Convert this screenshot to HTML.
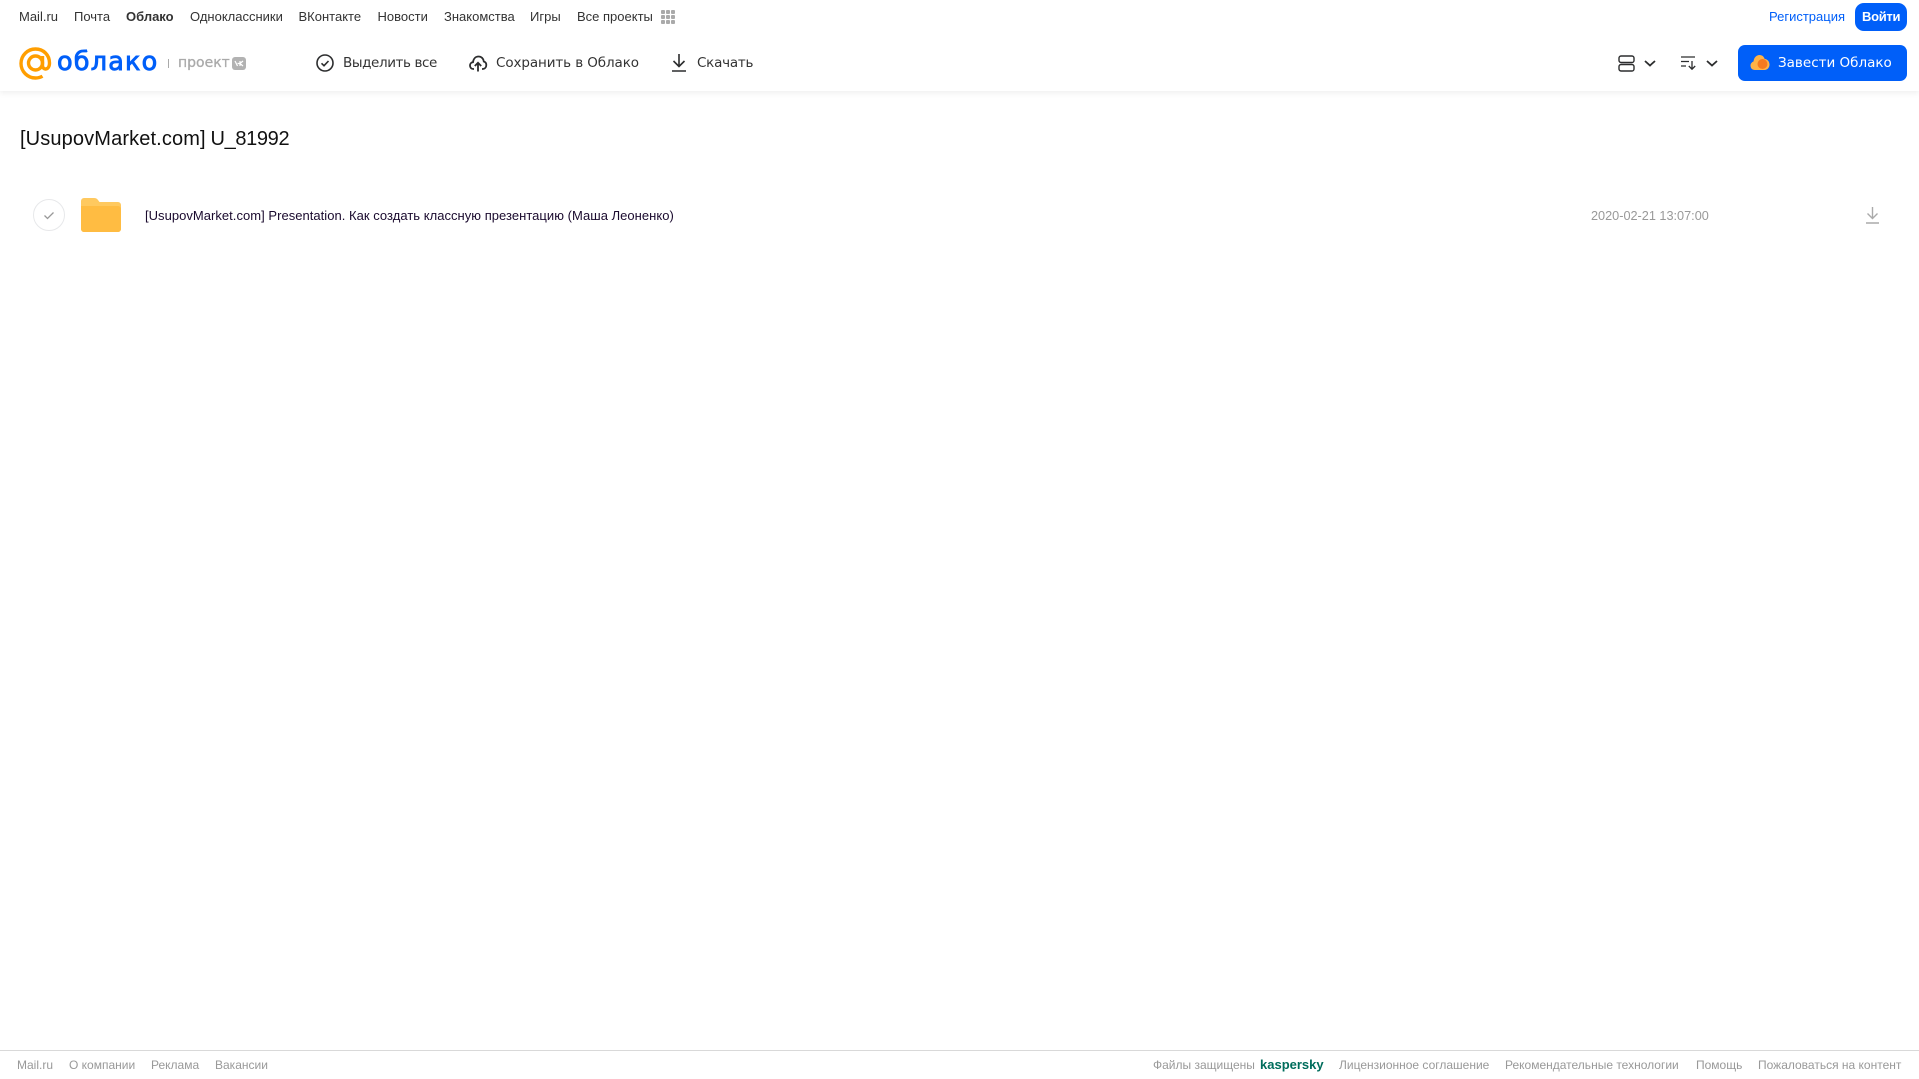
<!DOCTYPE html>
<html lang="ru"><head><meta charset="utf-8"><title>Облако</title>
<style>
html,body{margin:0;padding:0;width:1919px;height:1079px;overflow:hidden;background:#fff}
body{position:relative;font-family:"Liberation Sans",sans-serif}
.t{position:absolute;white-space:nowrap;transform-origin:left center;line-height:16px}
.n{font-size:13px;top:9px;color:#333}
.m{font-family:"DejaVu Sans",sans-serif;font-size:13.5px;top:55px;color:#333;line-height:16px}
.f{font-size:12px;top:1057px;color:#999}
svg{position:absolute;overflow:visible}
#hd{position:absolute;left:0;top:0;width:1919px;height:91px;background:#fff;box-shadow:0 2px 6px rgba(0,0,0,.07)}
</style></head><body>
<div id="hd"></div>
<span class="t n" style="left:19px">Mail.ru</span>
<span class="t n" style="left:74px">Почта</span>
<span class="t n" style="left:126px;font-weight:bold">Облако</span>
<span class="t n" style="left:190px">Одноклассники</span>
<span class="t n" style="left:298.500px">ВКонтакте</span>
<span class="t n" style="left:377.500px">Новости</span>
<span class="t n" style="left:444px">Знакомства</span>
<span class="t n" style="left:530px">Игры</span>
<span class="t n" style="left:577px">Все проекты</span>
<svg style="left:661px;top:10px" width="14" height="14" fill="#aaa"><rect x="0" y="0" width="4" height="4" rx="1"/><rect x="5" y="0" width="4" height="4" rx="1"/><rect x="10" y="0" width="4" height="4" rx="1"/><rect x="0" y="5" width="4" height="4" rx="1"/><rect x="5" y="5" width="4" height="4" rx="1"/><rect x="10" y="5" width="4" height="4" rx="1"/><rect x="0" y="10" width="4" height="4" rx="1"/><rect x="5" y="10" width="4" height="4" rx="1"/><rect x="10" y="10" width="4" height="4" rx="1"/></svg>
<span class="t n" style="left:1769px;color:#005ff9">Регистрация</span>
<div style="position:absolute;left:1855px;top:3px;width:52px;height:28px;border-radius:9px;background:#005ff9"></div>
<span class="t n" style="left:1862px;color:#fff;font-weight:bold;letter-spacing:-.3px">Войти</span>

<svg style="left:19px;top:47px" width="33" height="33" viewBox="0 0 33 33" fill="none" stroke="#ff9e00" stroke-width="3.400"><circle cx="16.5" cy="16" r="7"/><path d="M23.5 9v9.500c0 5 7 5 7-2.500 0-8-6-14-14-14S2 8.500 2 16.500 8.500 31 16.500 31c3 0 5-.6 7-1.800"/></svg>
<span class="t" style="left:57px;top:44px;line-height:36px;font-family:'DejaVu Sans',sans-serif;font-size:25.5px;letter-spacing:1.200px;color:#005ff9;-webkit-text-stroke:.9px #005ff9">облако</span>
<div style="position:absolute;left:168px;top:59px;width:1px;height:9px;background:#aaa"></div>
<span class="t" style="left:178px;top:55px;font-family:'DejaVu Sans',sans-serif;font-size:14px;color:#aaa;-webkit-text-stroke:.3px #aaa">проект</span>
<svg style="left:232px;top:57px" width="14" height="13"><rect width="14" height="13" rx="3" fill="#b2b2b2"/><path d="M3 4l2.500 5M5.500 6.500h2M8 4v5M11 4L8 6.500 11 9" fill="none" stroke="#fff" stroke-width="1.200"/></svg>

<svg style="left:316px;top:54px" width="18" height="18" fill="none" stroke="#2c2d2e" stroke-width="1.600"><circle cx="9" cy="9" r="8"/><path d="M5.500 9.300l2.500 2.400 4.500-4.700"/></svg>
<span class="t m" style="left:343px;letter-spacing:-.4px">Выделить все</span>
<svg style="left:469px;top:55px" width="18" height="17" fill="none" stroke="#2c2d2e" stroke-width="1.800"><path d="M5 14H4.500C2 14 1 12.300 1 10.500 1 8.700 2.300 7.300 4 7.200 4.400 3.800 6.500 1.500 9.500 1.500c3 0 5 2.200 5.300 5 1.500.4 2.500 1.800 2.500 3.500 0 2.200-1.400 4-3.800 4H13"/><path d="M9 16.500V8M5.800 11L9 7.800l3.200 3.200"/></svg>
<span class="t m" style="left:496px;letter-spacing:-.1px">Сохранить в Облако</span>
<svg style="left:672px;top:54px" width="14" height="18" fill="none" stroke="#2c2d2e" stroke-width="1.600"><path d="M7 0v12M1.500 7L7 12.500 12.500 7M0 17h14"/></svg>
<span class="t m" style="left:697px;letter-spacing:-.25px">Скачать</span>

<svg style="left:1618px;top:55px" width="17" height="17" fill="none" stroke="#2c2d2e" stroke-width="1.400"><rect x="1" y="1" width="15" height="6.500" rx="2"/><rect x="1" y="9.500" width="15" height="6.500" rx="2"/></svg>
<svg style="left:1644px;top:60px" width="12" height="7" fill="none" stroke="#2c2d2e" stroke-width="1.800"><path d="M1 1l5 4.500L11 1"/></svg>
<svg style="left:1681px;top:56px" width="16" height="14" fill="none" stroke="#2c2d2e" stroke-width="1.300"><path d="M0 1h14M0 5.500h8M0 10h5M11 5v8M7.800 10l3.200 3.200 3.200-3.200"/></svg>
<svg style="left:1706px;top:60px" width="12" height="7" fill="none" stroke="#2c2d2e" stroke-width="1.800"><path d="M1 1l5 4.500L11 1"/></svg>
<div style="position:absolute;left:1738px;top:45px;width:169px;height:36px;border-radius:7px;background:#005ff9"></div>
<svg style="left:1750px;top:54px" width="20" height="18"><path d="M5 16C2 16 .5 14 .5 11.500.5 9.500 2 8 3.500 7.500 4 3.500 6.500 1 9.500 1c2.700 0 4.500 1.800 5.200 4 2.800.2 4.800 2.600 4.800 5.500s-2 5.500-5 5.500z" fill="#ffb347"/><circle cx="12.500" cy="10" r="5" fill="#f57a1f"/></svg>
<span class="t m" style="left:1778px;color:#fff">Завести Облако</span>

<span class="t" style="left:20px;top:127px;line-height:24px;font-size:20px;letter-spacing:.13px;color:#111">[UsupovMarket.com]</span>
<span class="t" style="left:210.500px;top:127px;line-height:24px;font-size:20px;letter-spacing:-.35px;color:#111">U_81992</span>

<svg style="left:33px;top:199px" width="32" height="32" fill="none"><circle cx="16" cy="16" r="15.500" stroke="#e7e8ea"/><path d="M11.500 16.500l3 3 6-6" stroke="#999" stroke-width="1.300"/></svg>
<svg style="left:81px;top:198px" width="40" height="34"><path d="M0 3a3 3 0 0 1 3-3h10c2 0 3 .6 4 2l1.500 2H37a3 3 0 0 1 3 3v24a3 3 0 0 1-3 3H3a3 3 0 0 1-3-3z" fill="#ffc95f"/><path d="M0 8h37a3 3 0 0 1 3 3v20a3 3 0 0 1-3 3H3a3 3 0 0 1-3-3z" fill="#ffbc42"/></svg>
<span class="t" style="left:145px;top:208px;font-size:13px;letter-spacing:.03px;color:#1a0a2e">[UsupovMarket.com] Presentation. Как создать классную презентацию (Маша Леоненко)</span>
<span class="t" style="left:1591px;top:208px;font-size:12.700px;color:#999">2020-02-21 13:07:00</span>
<svg style="left:1866px;top:207px" width="13" height="17" fill="none" stroke="#aaa" stroke-width="1.400"><path d="M6.500 0v11M1.500 6.500l5 5 5-5M0 16h13"/></svg>

<div style="position:absolute;left:0;top:1050px;width:1919px;height:1px;background:#d9d9d9"></div>
<span class="t f" style="left:17px">Mail.ru</span>
<span class="t f" style="left:69px">О компании</span>
<span class="t f" style="left:151px">Реклама</span>
<span class="t f" style="left:215px">Вакансии</span>
<span class="t f" style="left:1153px">Файлы защищены</span>
<span class="t f" style="left:1260px;color:#006d5c;font-weight:bold;font-size:13px">kaspersky</span>
<span class="t f" style="left:1339px">Лицензионное соглашение</span>
<span class="t f" style="left:1505px">Рекомендательные технологии</span>
<span class="t f" style="left:1696px">Помощь</span>
<span class="t f" style="left:1758px">Пожаловаться на контент</span>
</body></html>
